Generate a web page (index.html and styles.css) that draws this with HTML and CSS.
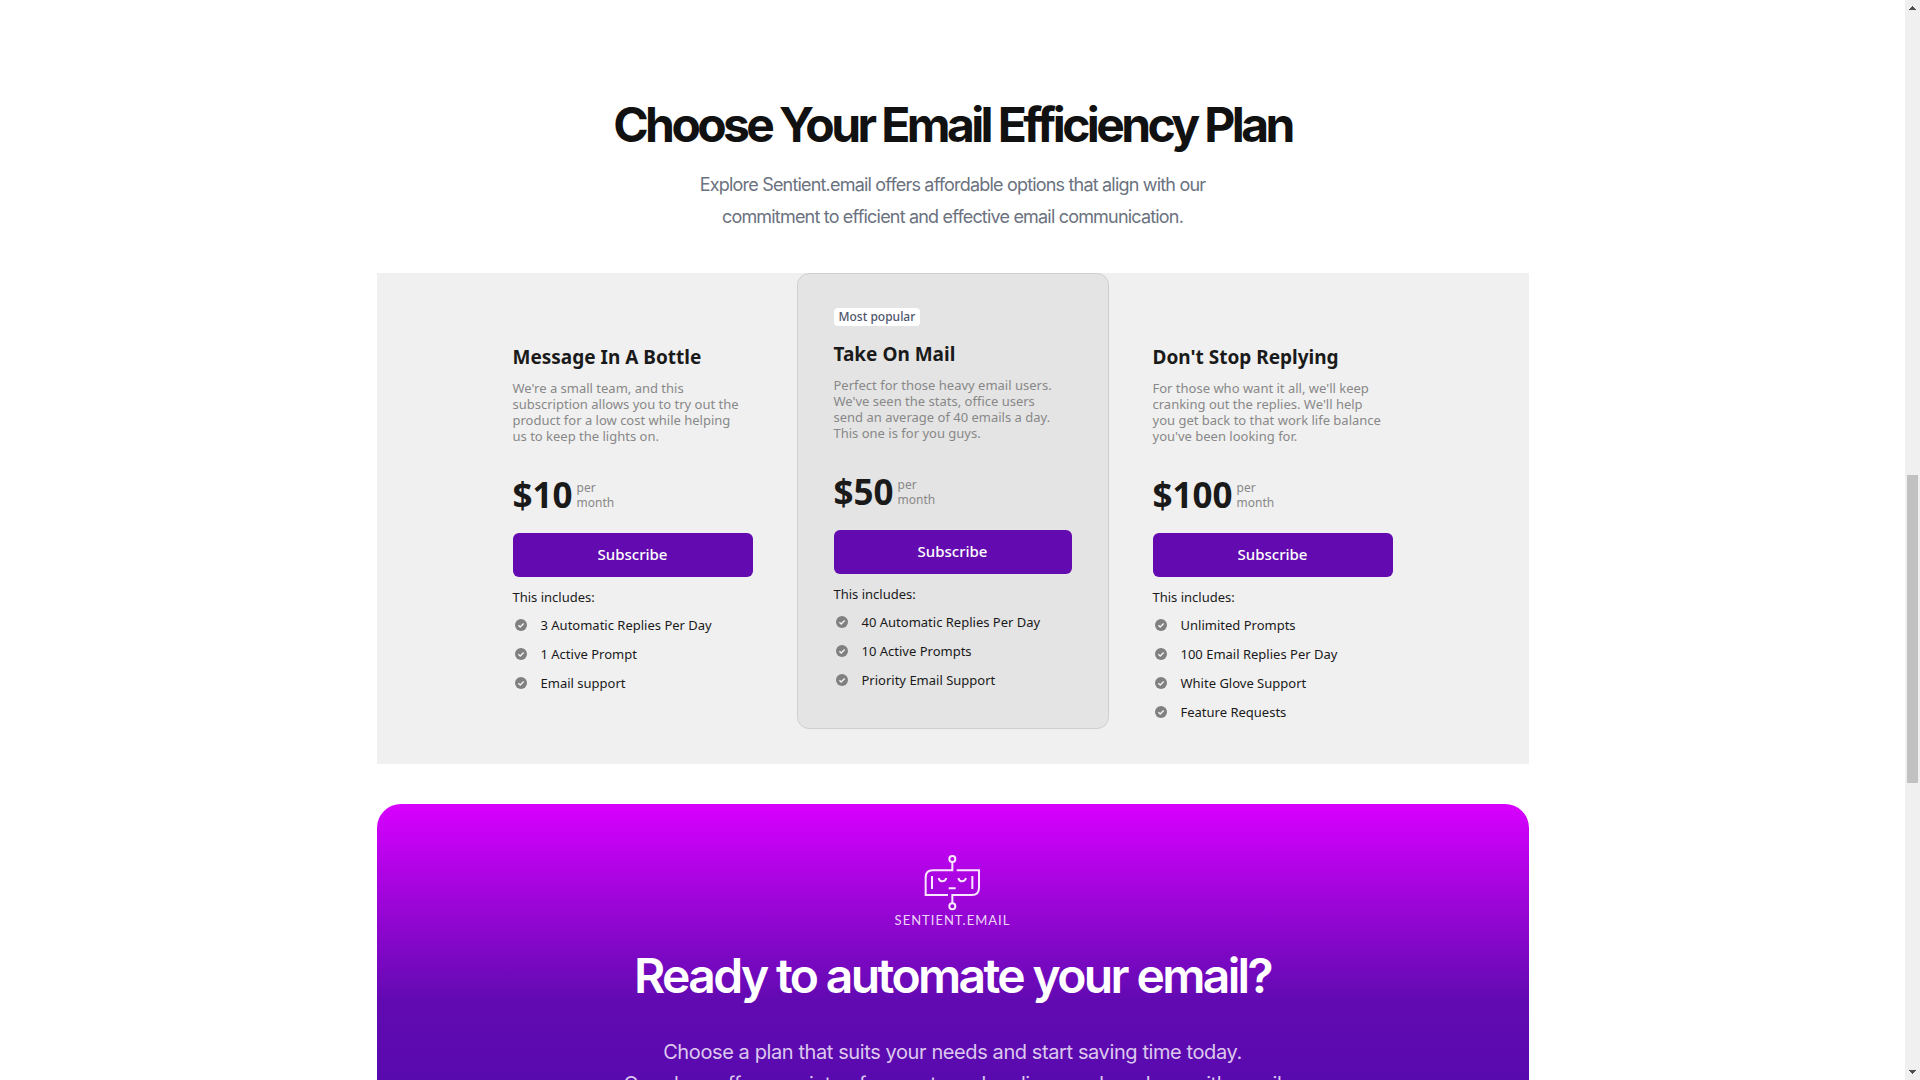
FILE: index.html
```html
<!DOCTYPE html>
<html lang="en">
<head>
<meta charset="utf-8">
<meta name="viewport" content="width=device-width, initial-scale=1">
<title>Sentient.email – Plans</title>
<link rel="stylesheet" href="styles.css">
</head>
<body>
<svg class="defs" aria-hidden="true">
  <symbol id="check" viewBox="0 0 12 12">
    <circle cx="6" cy="6" r="6" fill="currentColor"/>
    <path d="M3.4 6.2 5.2 8 8.7 4.4" fill="none" stroke="#f0f0f0" stroke-width="1.5"/>
  </symbol>
</svg>
<div class="shell">
  <main class="page">
    <header class="intro">
      <h2 class="intro-title">Choose Your Email Efficiency Plan</h2>
      <p class="intro-text">Explore Sentient.email offers affordable options that align with our<br>commitment to efficient and effective email communication.</p>
    </header>

    <section class="plans">
      <article class="plan">
        <h3 class="plan-name">Message In A Bottle</h3>
        <p class="plan-desc">We're a small team, and this<br>subscription allows you to try out the<br>product for a low cost while helping<br>us to keep the lights on.</p>
        <div class="price"><span class="amount">$10</span><span class="period">per<br>month</span></div>
        <button class="subscribe" type="button">Subscribe</button>
        <p class="includes">This includes:</p>
        <ul class="features">
          <li><svg class="check"><use href="#check"/></svg>3 Automatic Replies Per Day</li>
          <li><svg class="check"><use href="#check"/></svg>1 Active Prompt</li>
          <li><svg class="check"><use href="#check"/></svg>Email support</li>
        </ul>
      </article>

      <article class="plan plan-popular">
        <span class="badge">Most popular</span>
        <h3 class="plan-name">Take On Mail</h3>
        <p class="plan-desc">Perfect for those heavy email users.<br>We've seen the stats, office users<br>send an average of 40 emails a day.<br>This one is for you guys.</p>
        <div class="price"><span class="amount">$50</span><span class="period">per<br>month</span></div>
        <button class="subscribe" type="button">Subscribe</button>
        <p class="includes">This includes:</p>
        <ul class="features">
          <li><svg class="check"><use href="#check"/></svg>40 Automatic Replies Per Day</li>
          <li><svg class="check"><use href="#check"/></svg>10 Active Prompts</li>
          <li><svg class="check"><use href="#check"/></svg>Priority Email Support</li>
        </ul>
      </article>

      <article class="plan">
        <h3 class="plan-name">Don't Stop Replying</h3>
        <p class="plan-desc">For those who want it all, we'll keep<br>cranking out the replies. We'll help<br>you get back to that work life balance<br>you've been looking for.</p>
        <div class="price"><span class="amount">$100</span><span class="period">per<br>month</span></div>
        <button class="subscribe" type="button">Subscribe</button>
        <p class="includes">This includes:</p>
        <ul class="features">
          <li><svg class="check"><use href="#check"/></svg>Unlimited Prompts</li>
          <li><svg class="check"><use href="#check"/></svg>100 Email Replies Per Day</li>
          <li><svg class="check"><use href="#check"/></svg>White Glove Support</li>
          <li><svg class="check"><use href="#check"/></svg>Feature Requests</li>
        </ul>
      </article>
    </section>

    <section class="cta">
      <svg class="robot" viewBox="132 42 174 174" fill="none" stroke="currentColor" stroke-width="6" aria-hidden="true">
        <circle cx="217" cy="57" r="9"/>
        <path d="M217 66V91H158Q137 91 137 112V165H204"/>
        <path d="M230 91H297V143Q297 165 275 165H217V190"/>
        <circle cx="217" cy="199" r="9"/>
        <path d="M156 108V147M277 108V147M206 145H227"/>
        <path d="M176 114Q178 124 187 124T199 114M235 114Q237 124 246 124T258 114"/>
      </svg>
      <span class="wordmark">SENTIENT.EMAIL</span>
      <h2 class="cta-title">Ready to automate your email?</h2>
      <p class="cta-text">Choose a plan that suits your needs and start saving time today.<br>Our plans offer a variety of prompts and replies per day, along with email</p>
    </section>
  </main>

  <div class="scrollbar" aria-hidden="true">
    <svg class="arrow arrow-up" viewBox="0 0 7 4" shape-rendering="crispEdges"><path d="M3 0h1v1h1v1h1v1h1v1H0V3h1V2h1V1h1z"/></svg>
    <div class="thumb"></div>
    <svg class="arrow arrow-down" viewBox="0 0 7 4" shape-rendering="crispEdges"><path d="M0 0h7v1H6v1H5v1H4v1H3V3H2V2H1V1H0z"/></svg>
  </div>
</div>
</body>
</html>
```
FILE: styles.css
```css
* {
  box-sizing: border-box;
}

body,
h2,
h3,
p,
ul {
  margin: 0;
  padding: 0;
}

body {
  background: #fff;
  color: #1a1a1a;
  font-family: "Noto Sans", sans-serif;
  font-size: 13px;
  line-height: 16px;
}

.defs {
  display: none;
}

.shell {
  display: flex;
  height: 100vh;
  overflow: hidden;
}

.page {
  flex: 1;
  display: flex;
  flex-direction: column;
  align-items: center;
  gap: 40px;
  padding: 101px 24px 0;
  overflow: hidden;
}

/* Intro */
.intro {
  flex: none;
  display: flex;
  flex-direction: column;
  align-items: center;
  gap: 20px;
  font-family: Inter, sans-serif;
  text-align: center;
}

.intro-title {
  color: #111;
  font-size: 48px;
  font-weight: 700;
  line-height: 48px;
  letter-spacing: -0.075em;
}

.intro-text {
  color: #6b7280;
  font-size: 18px;
  line-height: 32px;
  letter-spacing: -0.045em;
}

/* Plans */
.plans {
  flex: none;
  display: flex;
  justify-content: center;
  align-items: flex-start;
  gap: 8px;
  width: 100%;
  max-width: 1152px;
  padding-bottom: 35px;
  background: #f0f0f0;
}

.plan {
  display: flex;
  flex-direction: column;
  width: 312px;
  padding: 71px 36px 9px;
}

.plan-popular {
  padding: 34px 36px 40px;
  border: 1px solid #cfcfcf;
  border-radius: 12px;
  background: #e4e4e4;
}

.badge {
  align-self: flex-start;
  margin-bottom: 15px;
  padding: 0 5px;
  border-radius: 4px;
  background: #fff;
  color: #4f566b;
  font-size: 12px;
  font-weight: 500;
  line-height: 18px;
}

.plan-name {
  margin-bottom: 10px;
  font-size: 19px;
  font-weight: 700;
  line-height: 26px;
}

.plan-desc {
  margin-bottom: 32px;
  color: #888;
  white-space: nowrap;
}

.price {
  display: flex;
  align-items: center;
  gap: 4px;
  height: 38px;
  margin-bottom: 19px;
}

.amount {
  font-size: 35px;
  font-weight: 700;
  line-height: 38px;
}

.period {
  color: #888;
  font-size: 12px;
  line-height: 15px;
}

.subscribe {
  height: 44px;
  margin-bottom: 12px;
  padding: 0 6px 2px;
  border: 0;
  border-radius: 6px;
  background: #630bb0;
  color: #fff;
  font: 500 15px/24px "Noto Sans", sans-serif;
}

.includes {
  margin-bottom: 12px;
}

.features {
  display: flex;
  flex-direction: column;
  gap: 13px;
  list-style: none;
}

.features li {
  display: flex;
  align-items: center;
  gap: 14px;
  padding-left: 2px;
}

.check {
  width: 12px;
  height: 12px;
  color: #808080;
}

/* Call to action */
.cta {
  flex: none;
  display: flex;
  flex-direction: column;
  align-items: center;
  width: 100%;
  max-width: 1152px;
  padding: 50px 24px 80px;
  border-radius: 24px;
  background: linear-gradient(#d800ff, #620ab2 196px, #580aae 280px);
  color: #fff;
  font-family: Inter, sans-serif;
  text-align: center;
}

.robot {
  width: 58px;
  height: 58px;
  color: #f9e6ff;
}

.wordmark {
  margin: 1px 0 25px;
  color: #efd6f9;
  font-family: Lato, sans-serif;
  font-size: 13px;
  line-height: 14px;
  letter-spacing: 1px;
}

.cta-title {
  margin-bottom: 36px;
  font-size: 48px;
  font-weight: 600;
  line-height: 48px;
  letter-spacing: -0.055em;
}

.cta-text {
  color: #dcc8ee;
  font-size: 20px;
  line-height: 32px;
  letter-spacing: -0.02em;
}

/* Scrollbar */
.scrollbar {
  display: grid;
  grid-template-rows: 475fr 308fr 297fr;
  flex: none;
  width: 15px;
  padding: 0 2px;
  background: #f0f0f0;
}

.thumb {
  background: #c1c1c1;
}

.arrow {
  justify-self: center;
  width: 7px;
  height: 4px;
  margin: 6px 0;
  fill: #505050;
}

.arrow-down {
  align-self: end;
}
```
